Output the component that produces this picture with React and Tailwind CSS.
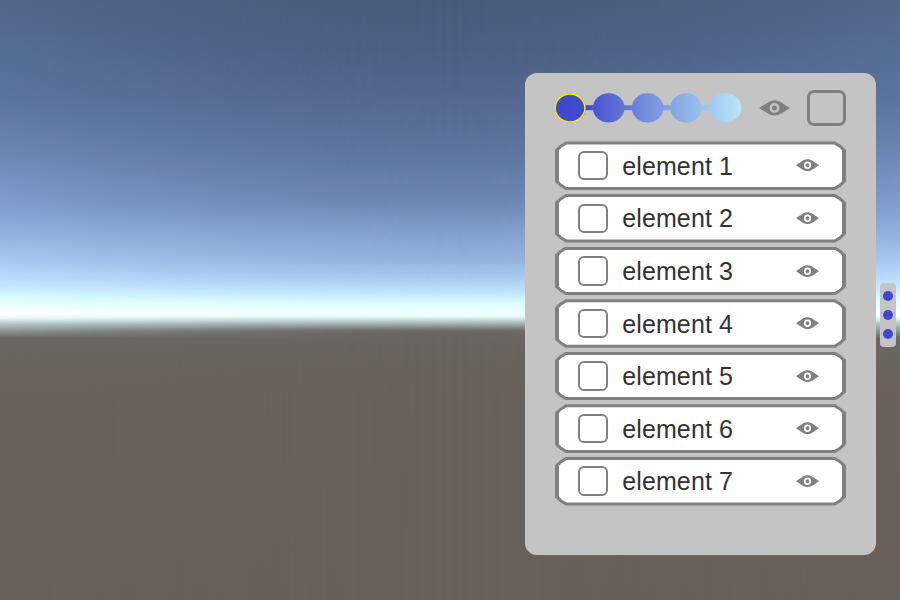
import React from "react";

const elements = [1, 2, 3, 4, 5, 6, 7].map((n) => `element ${n}`);

const FRAME = "[clip-path:polygon(0_8.5px,5px_3.8px,11px_0,calc(100%-11px)_0,calc(100%-5px)_3.8px,100%_8.5px,100%_calc(100%-8.5px),calc(100%-5px)_calc(100%-3.8px),calc(100%-11px)_100%,11px_100%,5px_calc(100%-3.8px),0_calc(100%-8.5px))]";
const FACE = "[clip-path:polygon(0_6px,3px_3px,8px_0,calc(100%-8px)_0,calc(100%-3px)_3px,100%_6px,100%_calc(100%-6px),calc(100%-3px)_calc(100%-3px),calc(100%-8px)_100%,8px_100%,3px_calc(100%-3px),0_calc(100%-6px))]";

function Sky() {
  return (
    <div className="absolute inset-0">
      <div className="absolute inset-0 bg-[linear-gradient(180deg,#485c7d_0px,#4c6083_50px,#54688f_98px,#556c94_115px,#5d749e_150px,#6a86b1_200px,#85a3cf_236px,#92b1dc_258px,#a8cbee_278px,#c4e7ff_294px,#dcfeff_303px,#efffff_313px,#e9ffff_316px,#c5d9d8_320px,#7e8583_328px,#6b6664_331px,#69635d_360px,#6a615c_400px,#69605b_600px)]" />
      <div className="absolute inset-0 bg-[linear-gradient(180deg,#526789_0px,#56698f_28px,#556e96_50px,#5b749e_98px,#6a86b1_150px,#7792c0_180px,#829fcd_207px,#94b4df_236px,#a9caf1_262px,#c1e4ff_284px,#d6fcff_297px,#faffff_312px,#ffffff_315px,#ddf4f2_319px,#b4c5c4_324px,#7e8382_334px,#6b6664_338px,#69645e_365px,#6b615c_400px,#69605b_600px)] [mask-image:linear-gradient(90deg,#000_0%,rgb(0_0_0/.65)_11%,rgb(0_0_0/.3)_25%,rgb(0_0_0/.08)_38%,transparent_50%,rgb(0_0_0/.08)_62%,rgb(0_0_0/.3)_75%,rgb(0_0_0/.65)_89%,#000_100%)]" />
    </div>
  );
}

function Eye({ className }) {
  return (
    <svg viewBox="0 0 31 16" preserveAspectRatio="none" className={className} fill="none">
      <path d="M0 8C3 6.4 5.5 4.4 8.8 2.4 13 -.2 18 -.2 22.2 2.4 25.5 4.4 28 6.4 31 8 28 9.6 25.5 11.6 22.2 13.6 18 16.2 13 16.2 8.8 13.6 5.5 11.6 3 9.6 0 8Z" fill="#808080" />
      <circle cx="15.5" cy="8" r="3.7" stroke="currentColor" strokeWidth="2.4" />
    </svg>
  );
}

function ColorSteps() {
  return (
    <svg viewBox="0 0 190 34" className="h-[34px] w-[190px]">
      <defs>
        <linearGradient id="steps" gradientUnits="userSpaceOnUse" x1="1" y1="0" x2="188" y2="0">
          <stop offset="0" stopColor="#3f48cc" />
          <stop offset=".16" stopColor="#434ccc" />
          <stop offset=".5" stopColor="#7590de" />
          <stop offset=".8" stopColor="#9bc3ef" />
          <stop offset="1" stopColor="#b8e8fa" />
        </linearGradient>
      </defs>
      <g fill="url(#steps)" transform="translate(-1 0)">
        <rect x="16" y="14.2" width="156" height="5" />
        <ellipse cx="16.2" cy="17" rx="15.5" ry="14.5" />
        <ellipse cx="54.7" cy="16.9" rx="15.8" ry="14.6" />
        <ellipse cx="93.6" cy="16.9" rx="15.8" ry="14.6" />
        <ellipse cx="132.3" cy="16.9" rx="15.8" ry="14.6" />
        <ellipse cx="171.3" cy="16.9" rx="16" ry="14.6" />
      </g>
      <ellipse cx="15" cy="17" rx="14.9" ry="13.9" fill="none" stroke="#fff200" strokeWidth="1.5" />
    </svg>
  );
}

function ElementRow({ label }) {
  return (
    <div className={`h-[48.6px] w-[291.5px] bg-[#808080] px-[4px] py-[3px] ${FRAME}`}>
      <div className={`flex h-full items-center bg-white pl-[19.5px] pr-[23px] ${FACE}`}>
        <div className="h-[29.5px] w-[29.5px] rounded-[6px] border-2 border-[#808080]" />
        <span className="ml-[14.5px] flex-1 pt-[0.4px] text-[25px] leading-[30px] tracking-[0.12px] text-[#323232]">{label}</span>
        <Eye className="h-[12.4px] w-[23px] text-white" />
      </div>
    </div>
  );
}

export default function App() {
  return (
    <div className="relative h-[600px] w-[900px] overflow-hidden bg-[#69605b] font-['Liberation_Sans',Arial,sans-serif]">
      <Sky />
      <div className="relative flex h-full items-start justify-end pr-[4.5px]">
        <section className="mt-[73.3px] flex h-[482.2px] w-[351px] flex-col rounded-[12px] bg-[#c4c4c4] pl-[29.7px]">
          <header className="mt-[16.7px] flex h-[36px] w-[291.8px] items-center">
            <ColorSteps />
            <Eye className="ml-[14.5px] h-[16px] w-[31px] text-[#c4c4c4]" />
            <div className="ml-auto h-[36px] w-[39px] rounded-[7px] border-3 border-[#808080]" />
          </header>
          <div className="mt-[15.4px] flex flex-col gap-[4px]">
            {elements.map((label) => (
              <ElementRow key={label} label={label} />
            ))}
          </div>
        </section>
        <aside className="ml-[3.5px] mt-[282.5px] flex h-[64px] w-[16px] flex-col items-center justify-center gap-[9px] rounded-[4px] bg-[#c4c4c4]">
          <i className="h-[10px] w-[10px] rounded-full bg-[#3f48cc]" />
          <i className="h-[10px] w-[10px] rounded-full bg-[#3f48cc]" />
          <i className="h-[10px] w-[10px] rounded-full bg-[#3f48cc]" />
        </aside>
      </div>
    </div>
  );
}
